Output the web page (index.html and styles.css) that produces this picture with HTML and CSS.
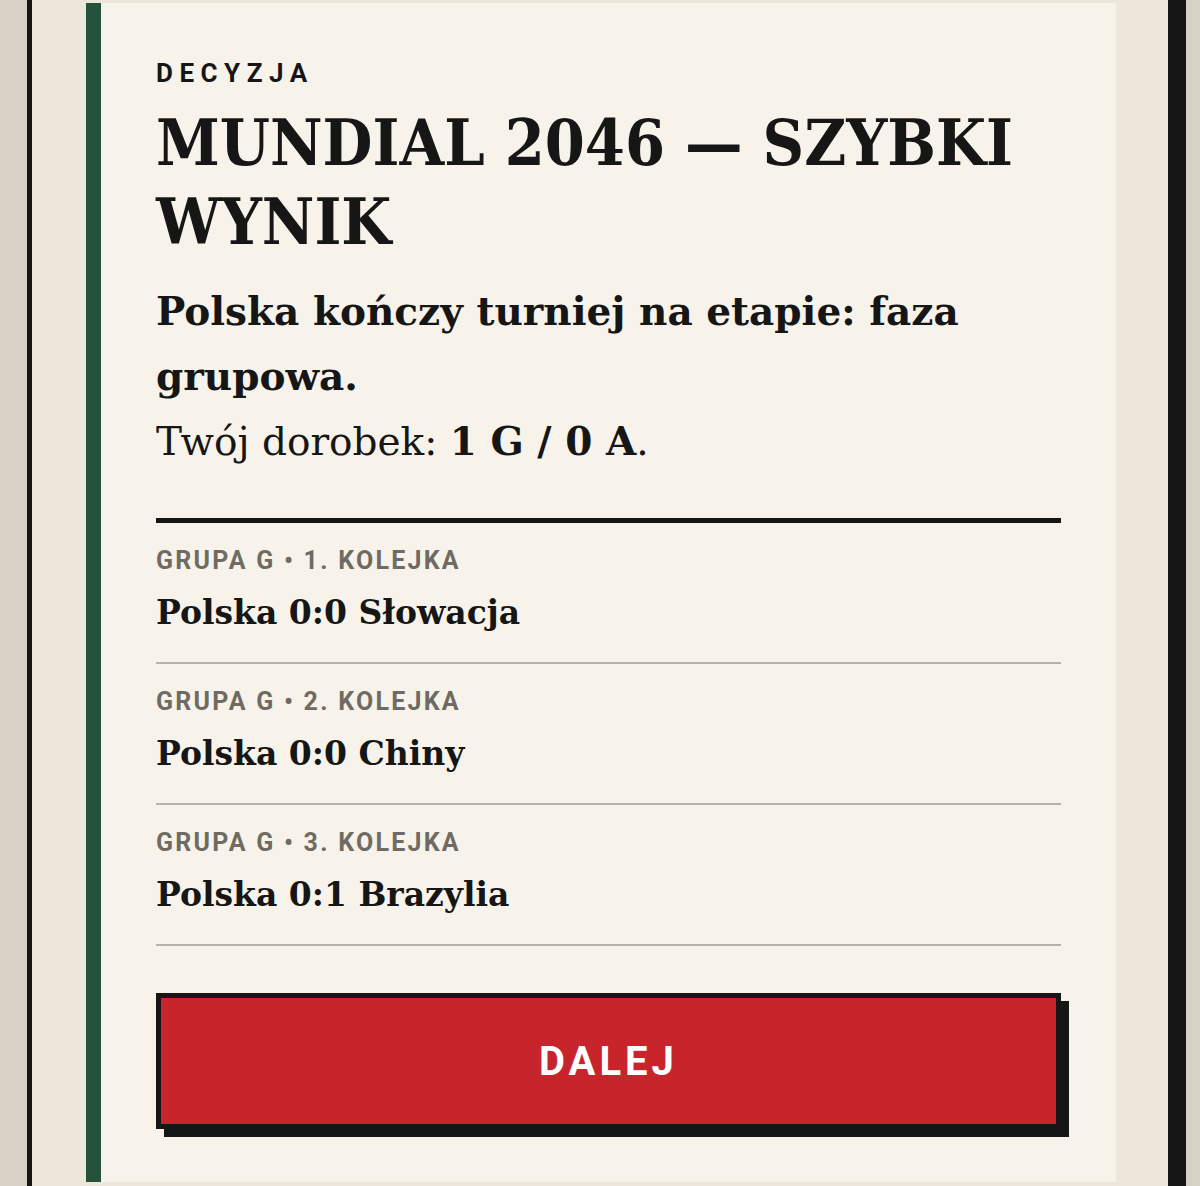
FILE: index.html
```html
<!DOCTYPE html>
<html lang="pl">
<head>
    <title>Mundial 2046 — Szybki wynik</title>
    <meta name="viewport" content="width=device-width, initial-scale=1">
    <link rel="stylesheet" href="styles.css">
</head>
<body>
    <div class="frame">
        <div class="card">
            <div class="kicker">Decyzja</div>
            <h1>Mundial 2046 — Szybki wynik</h1>
            <p class="summary">
                <strong>Polska kończy turniej na etapie: faza grupowa.</strong><br>
                Twój dorobek: <strong>1 G / 0 A</strong>.
            </p>

            <div class="matches">
                <div class="match">
                    <div class="match-label">Grupa G • 1. kolejka</div>
                    <div class="match-score">Polska 0:0 Słowacja</div>
                </div>
                <div class="match">
                    <div class="match-label">Grupa G • 2. kolejka</div>
                    <div class="match-score">Polska 0:0 Chiny</div>
                </div>
                <div class="match">
                    <div class="match-label">Grupa G • 3. kolejka</div>
                    <div class="match-score">Polska 0:1 Brazylia</div>
                </div>
            </div>

            <button type="button" class="next-btn">Dalej</button>
        </div>
    </div>
</body>
</html>
```

FILE: styles.css
```css
body {
    margin: 0;
    background-color: #d8d1c5;
    font-family: "DejaVu Serif", "Liberation Serif", serif;
    color: #161616;
}
.frame {
    margin-left: 27px;
    width: 1159px;
    box-sizing: border-box;
    border-left: 5px solid #161616;
    border-right: 18px solid #161616;
    background-color: #ede6da;
    padding: 3px 52px 4px 54px;
}
.card {
    background-color: #f7f3ea;
    border-left: 15px solid #24523a;
    padding: 55px 55px 53px 55px;
}
.kicker {
    font-family: Roboto, "Liberation Sans", sans-serif;
    font-weight: bold;
    font-size: 26px;
    line-height: 30px;
    letter-spacing: 0.25em;
    text-transform: uppercase;
}
h1 {
    margin: 15px 0 0 0;
    font-family: "DejaVu Serif Condensed", "DejaVu Serif", serif;
    font-stretch: condensed;
    font-size: 64px;
    line-height: 79px;
    font-weight: bold;
    text-transform: uppercase;
}
.summary {
    margin: 18px 0 0 0;
    font-size: 39px;
    line-height: 65px;
}
.matches {
    margin-top: 44px;
    border-top: 5px solid #161616;
}
.match {
    padding: 24px 0 29px 0;
    border-bottom: 2px solid #b5b2aa;
}
.match-label {
    font-family: Roboto, "Liberation Sans", sans-serif;
    font-weight: bold;
    font-size: 25px;
    line-height: 28px;
    letter-spacing: 0.09em;
    text-transform: uppercase;
    color: #6f6b62;
}
.match-score {
    margin-top: 18px;
    font-size: 33px;
    line-height: 40px;
    font-weight: bold;
}
.next-btn {
    display: block;
    width: 100%;
    height: 136px;
    margin-top: 47px;
    background-color: #c8242c;
    color: #fff;
    border: 5px solid #161616;
    box-shadow: 8px 8px 0 #161616;
    font-family: Roboto, "Liberation Sans", sans-serif;
    font-weight: bold;
    font-size: 40px;
    letter-spacing: 0.1em;
    text-transform: uppercase;
    cursor: pointer;
}
```
